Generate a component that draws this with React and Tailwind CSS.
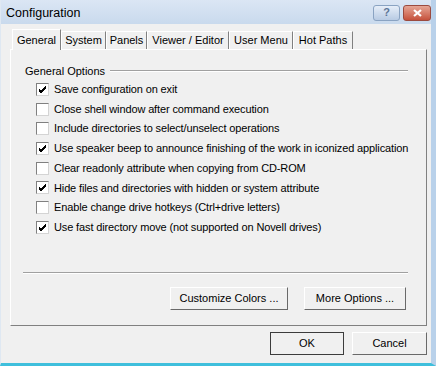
import React, { useState } from "react";

const tabs = [
  { name: "General", w: "w-[49px]" },
  { name: "System", w: "w-[45px]" },
  { name: "Panels", w: "w-[41px]" },
  { name: "Viewer / Editor", w: "w-[82px]" },
  { name: "User Menu", w: "w-[64px]" },
  { name: "Hot Paths", w: "w-[60px]" },
];

const options = [
  { label: "Save configuration on exit", checked: true },
  { label: "Close shell window after command execution", checked: false },
  { label: "Include directories to select/unselect operations", checked: false },
  { label: "Use speaker beep to announce finishing of the work in iconized application", checked: true },
  { label: "Clear readonly attribute when copying from CD-ROM", checked: false },
  { label: "Hide files and directories with hidden or system attribute", checked: true },
  { label: "Enable change drive hotkeys (Ctrl+drive letters)", checked: false },
  { label: "Use fast directory move (not supported on Novell drives)", checked: true },
];

function CheckBox({ checked }) {
  return (
    <div className="w-[13px] h-[13px] bg-white border border-t-[#808080] border-l-[#808080] border-r-[#d4d4d4] border-b-[#d4d4d4] flex items-center justify-center shrink-0">
      {checked && (
        <svg width="9" height="9" viewBox="0 0 9 9">
          <path d="M1 4 L3 6 L8 1 M1 5 L3 7 L8 2 M1 6 L3 8 L8 3" stroke="#000" strokeWidth="1" fill="none" />
        </svg>
      )}
    </div>
  );
}

function WinButton({ children, className, isDefault }) {
  return (
    <button
      className={`h-[23px] bg-[#f0f0f0] border ${isDefault ? "border-[#3c3c3c]" : "border-t-white border-l-white border-r-[#696969] border-b-[#696969]"} text-[11px] text-black ${className}`}
    >
      {children}
    </button>
  );
}

export default function App() {
  const [active, setActive] = useState(0);
  const [items, setItems] = useState(options);

  return (
    <div
      className="w-[436px] h-[366px] bg-[#f0f0f0] flex flex-col overflow-hidden border-r-[5px] border-r-[#b9d1ea] border-b-[3px] border-b-[#3fbfdc] border-l border-l-[#dfe8f2]"
      style={{ fontFamily: '"Liberation Sans", Arial, sans-serif' }}
    >
      <div className="h-[24px] shrink-0 bg-gradient-to-b from-[#dbe6f4] to-[#c9daed] flex items-center justify-between pl-[5px] pr-[0px]">
        <span className="text-[12.5px] text-black pt-[2px]">Configuration</span>
        <div className="flex gap-[3px] pt-[1px]">
          <div className="w-[27px] h-[16px] rounded-[3px] border border-[#8aa3c2] bg-gradient-to-b from-[#e6eef8] to-[#b8cbe3] flex items-center justify-center text-[11px] font-bold text-[#5d7597]">
            ?
          </div>
          <div className="w-[28px] h-[16px] rounded-[3px] border border-[#9b4a3f] bg-gradient-to-b from-[#e5a595] to-[#c5513c] flex items-center justify-center">
            <svg width="11" height="8" viewBox="0 0 11 8">
              <path d="M2 1 L9 7 M9 1 L2 7" stroke="#fff" strokeWidth="2.2" />
            </svg>
          </div>
        </div>
      </div>

      <div className="flex-1 flex flex-col pl-[9px] pr-[4px] pt-[5px]">
        <div className="flex items-end pl-[2px] h-[20px]">
          {tabs.map((t, i) => (
            <div
              key={t.name}
              onClick={() => setActive(i)}
              className={`${t.w} cursor-default text-[11px] text-black border-l border-l-white border-t border-t-white border-r border-r-[#808080] flex items-center justify-center whitespace-nowrap ${
                active === i ? "h-[21px] bg-[#f0f0f0] -mb-px z-10 relative" : "h-[18px]"
              }`}
            >
              {t.name}
            </div>
          ))}
        </div>
        <div className="h-[277px] border border-t-white border-l-white border-r-[#808080] border-b-[#808080] px-[12px] pt-[13px] flex flex-col">
          <div className="flex items-center gap-[5px] pl-[2px]">
            <span className="text-[11px] text-black">General Options</span>
            <div className="flex-1 h-[2px] border-t border-t-[#a0a0a0] border-b border-b-white mr-[6px]" />
          </div>
          <div className="flex flex-col pl-[13px]">
            {items.map((o, i) => (
              <div
                key={o.label}
                className="h-[19.7px] flex items-center gap-[5px]"
                onClick={() => setItems(items.map((x, j) => (j === i ? { ...x, checked: !x.checked } : x)))}
              >
                <CheckBox checked={o.checked} />
                <span className="text-[11px] text-black whitespace-nowrap tracking-[-0.13px]">{o.label}</span>
              </div>
            ))}
          </div>
          <div className="flex-1" />
          <div className="h-[2px] border-t border-t-[#a0a0a0] border-b border-b-white mr-[6px]" />
          <div className="flex justify-end gap-[16px] pr-[8px] pt-[13px] pb-[15px]">
            <WinButton className="w-[118px]">Customize Colors ...</WinButton>
            <WinButton className="w-[102px]">More Options ...</WinButton>
          </div>
        </div>
        <div className="flex justify-end gap-[8px] pt-[6px]">
          <WinButton className="w-[74px]" isDefault>OK</WinButton>
          <WinButton className="w-[75px]">Cancel</WinButton>
        </div>
      </div>
    </div>
  );
}
